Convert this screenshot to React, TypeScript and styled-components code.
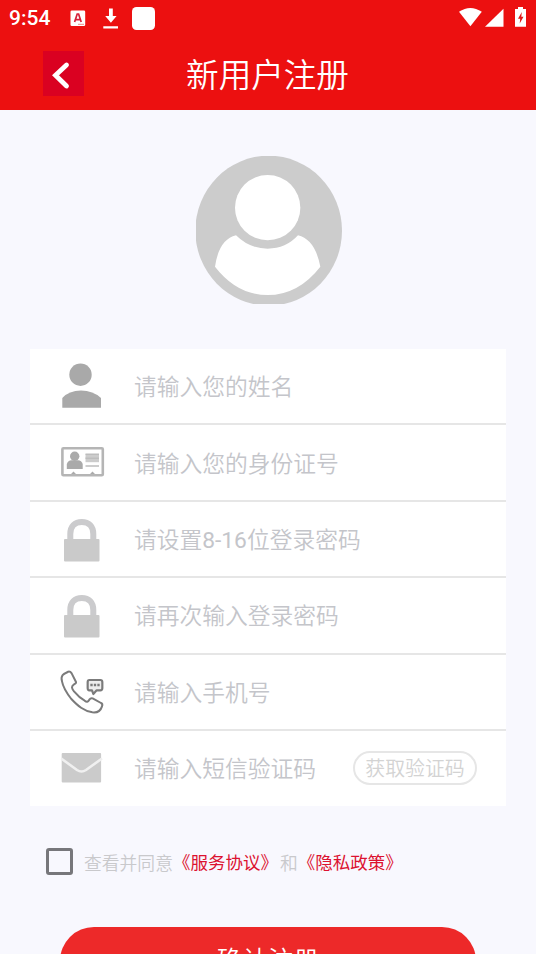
import React from "react";
import styled, { createGlobalStyle } from "styled-components";

const GlobalStyle = createGlobalStyle`
  * { box-sizing: border-box; }
  body {
    margin: 0;
    background: #f8f8fe;
    font-family: Roboto, "Noto Sans CJK SC", sans-serif;
    font-weight: 350;
  }
`;

const Screen = styled.main`
  width: 536px;
  height: 954px;
  overflow: hidden;
  display: flex;
  flex-direction: column;
`;

const Header = styled.header`
  flex: none;
  height: 110px;
  background: #ec1010;
  color: #fff;
`;

const StatusBar = styled.div`
  height: 37px;
  display: flex;
  align-items: center;
  padding: 0 10px 0 9px;
`;

const Clock = styled.span`
  width: 61px;
  font-size: 21px;
  line-height: 37px;
  font-weight: 500;
`;

const StatusIcons = styled.svg`
  display: block;
  flex: none;
`;

const Spacer = styled.div`
  flex: 1;
`;

const NavBar = styled.div`
  height: 73px;
  display: grid;
  grid-template-columns: 84px 1fr 84px;
  align-items: center;
`;

const BackButton = styled.div`
  width: 41px;
  height: 45px;
  margin-left: 43px;
  background: #da0121;
`;

const Title = styled.h1`
  margin: 0;
  padding: 4px 1px 0 0;
  text-align: center;
  font-size: 32.6px;
  line-height: 44px;
  font-weight: 350;
`;

const Avatar = styled.svg`
  flex: none;
  display: block;
  margin: 46px 0 0 196px;
`;

const Form = styled.section`
  flex: none;
  margin: 45px 30px 0;
  background: #fff;
`;

const Row = styled.div`
  height: 76.4px;
  display: flex;
  align-items: center;
  padding: 0 29px;
  border-bottom: 2px solid #e6e6e6;
  &:last-child {
    height: 75px;
    border-bottom: 0;
  }
`;

const FieldIcon = styled.svg`
  display: block;
  flex: none;
  margin-right: 29px;
`;

const Hint = styled.span`
  flex: 1;
  padding-top: 4px;
  white-space: nowrap;
  font-size: 22.75px;
  line-height: 32px;
  color: #c4c5ca;
`;

const Digits = styled.span`
  font-weight: 400;
`;

const CodeButton = styled.div`
  width: 124px;
  height: 34px;
  border: 2px solid #e6e6e6;
  border-radius: 17px;
  text-align: center;
  font-size: 19.9px;
  line-height: 33px;
  color: #d3d3d3;
`;

const Agreement = styled.div`
  flex: none;
  display: flex;
  align-items: center;
  height: 28px;
  margin: 42px 0 0 46px;
  font-size: 17.8px;
  color: #c9c9cc;
  white-space: nowrap;
`;

const Checkbox = styled.span`
  width: 27px;
  height: 27px;
  margin-right: 11px;
  border: 3px solid #77777b;
  border-radius: 3px;
`;

const Link = styled.span`
  margin-right: 2px;
  font-size: 17.5px;
  font-weight: 400;
  color: #dc1230;
`;

const Submit = styled.div`
  flex: none;
  height: 68px;
  margin: 51px 60px 0;
  border-radius: 34px;
  background: #ed2929;
  color: #fff;
  text-align: center;
  font-size: 25.6px;
  line-height: 68px;
`;

const PersonIcon = () => (
  <FieldIcon width="46" height="48" viewBox="0 0 46 48" fill="#a9a9a9">
    <circle cx="21.5" cy="12.7" r="11.2" />
    <path d="M3.3 45.7V36Q10 28.5 22 28.5T42 36V45.7Z" />
  </FieldIcon>
);

const CardIcon = () => (
  <FieldIcon width="46" height="48" viewBox="0 0 46 48" fill="#aaa">
    <rect x="3.4" y="9.2" width="40.4" height="27" rx="1" fill="none" stroke="#b5b5b5" strokeWidth="2.6" />
    <circle cx="15.7" cy="17.2" r="4.7" />
    <path d="M7.8 30V25Q9 21.5 12.5 21.2H19Q22.6 21.5 23.7 25V30Z" />
    <path d="M26.5 15.2H40V23.2H26.5Z" fill="#ccc" />
    <path d="M26.5 15.2H40M26.5 19.2H40M26.5 27H40" stroke="#bdbdbd" strokeWidth="1.6" />
    <path d="M12 35L14.5 32.5L17 35ZM31 35L33.5 32.5L36 35Z" />
  </FieldIcon>
);

const LockIcon = () => (
  <FieldIcon width="46" height="48" viewBox="0 -1 46 48">
    <path d="M11.3 25V18C11.3 10.5 15.8 6 22.8 6S34.3 10.5 34.3 18V25" fill="none" stroke="#cbcbcd" strokeWidth="6" />
    <rect x="5" y="23" width="35.5" height="22.5" rx="1" fill="#cacaca" />
  </FieldIcon>
);

const PhoneIcon = () => (
  <FieldIcon width="46" height="48" viewBox="117 54 138 144" fill="none" stroke="#7b7b7b">
    <path
      d="M126 94C121 76 130 72 145 65Q151 64 155 70L168 96Q169 100 162 103C153 109 155 115 162 124Q178 143 194 152C200 157 204 156 208 149Q212 143 218 145L243 159Q249 162 246 169C242 182 233 189 217 187C191 183 174 168 154 147Q130 116 126 94Z"
      strokeWidth="6"
      strokeLinejoin="round"
    />
    <path d="M208 90H241Q247 90 247 96V115Q247 121 241 121H230L220 132L216 121H208Q203 121 203 115V96Q203 90 208 90Z" fill="#eee" strokeWidth="6.5" strokeLinejoin="round" />
    <path d="M211 105H239" strokeWidth="7" strokeDasharray="7 3.5" />
  </FieldIcon>
);

const MailIcon = () => (
  <FieldIcon width="46" height="48" viewBox="0 -0.5 46 48">
    <rect x="2.7" y="8.5" width="39.4" height="29.5" rx="1" fill="#cbcbcb" />
    <path d="M2.2 14L18 25.5Q22.5 28.5 27 25.5L43 14" fill="none" stroke="#f0f0f0" strokeWidth="2.6" />
  </FieldIcon>
);

const fields = [
  { id: "name", hint: "请输入您的姓名", Icon: PersonIcon },
  { id: "idCard", hint: "请输入您的身份证号", Icon: CardIcon },
  { id: "password", hint: <>请设置<Digits>8-16</Digits>位登录密码</>, Icon: LockIcon },
  { id: "confirm", hint: "请再次输入登录密码", Icon: LockIcon },
  { id: "phone", hint: "请输入手机号", Icon: PhoneIcon },
  { id: "code", hint: "请输入短信验证码", Icon: MailIcon, action: "获取验证码" },
];

export default function App() {
  return (
    <Screen>
      <GlobalStyle />
      <Header>
        <StatusBar>
          <Clock>9:54</Clock>
          <StatusIcons width="86" height="37" viewBox="70 0 86 37" fill="#fff">
            <rect x="70.5" y="10.5" width="14.7" height="15.5" rx="1.3" />
            <path d="M74.6 22L77.2 14H78.6L81.2 22M75.6 19.6H80.2" fill="none" stroke="#d6203a" strokeWidth="1.7" />
            <path d="M78 24.3H84" stroke="#e88" strokeWidth="1" />
            <path d="M109 8.5H112.8V16H116.6L110.9 22.8L105.2 16H109ZM103.3 26.3H118V28.6H103.3Z" />
            <rect x="132" y="7" width="23" height="23" rx="4.5" />
          </StatusIcons>
          <Spacer />
          <StatusIcons width="68" height="37" viewBox="458 0 68 37" fill="#fff">
            <path d="M459 11.8Q470.3 4 481.8 11.8L470.4 26.3Z" />
            <path d="M503.5 8.8V26.8H485Z" />
            <path d="M518 7H523V9H526V26.8H515V9H518Z" />
            <path d="M521.8 12L518 18.7H520.2L519.7 23.5L523.5 16.8H521.3Z" fill="#e01818" />
          </StatusIcons>
        </StatusBar>
        <NavBar>
          <BackButton>
            <svg width="41" height="45" viewBox="0 0 41 45">
              <path d="M23.5 14L12.5 24.3L23.5 35" fill="none" stroke="#fff" strokeWidth="4.8" strokeLinecap="round" />
            </svg>
          </BackButton>
          <Title>新用户注册</Title>
        </NavBar>
      </Header>
      <Avatar width="146" height="148" viewBox="48 48 438 444">
        <ellipse cx="266" cy="272" rx="220" ry="225" fill="#ccc" />
        <circle cx="263" cy="203" r="98" fill="#fff" />
        <path
          d="M105 380Q117 298 168 286Q208 326 263 326T354 286Q405 298 421 380Q355 465 263 465T105 380Z"
          fill="#fff"
        />
      </Avatar>
      <Form>
        {fields.map(({ id, hint, Icon, action }) => (
          <Row key={id}>
            <Icon />
            <Hint>{hint}</Hint>
            {action && <CodeButton>{action}</CodeButton>}
          </Row>
        ))}
      </Form>
      <Agreement>
        <Checkbox />
        查看并同意<Link>《服务协议》</Link>和<Link>《隐私政策》</Link>
      </Agreement>
      <Submit>确认注册</Submit>
    </Screen>
  );
}
